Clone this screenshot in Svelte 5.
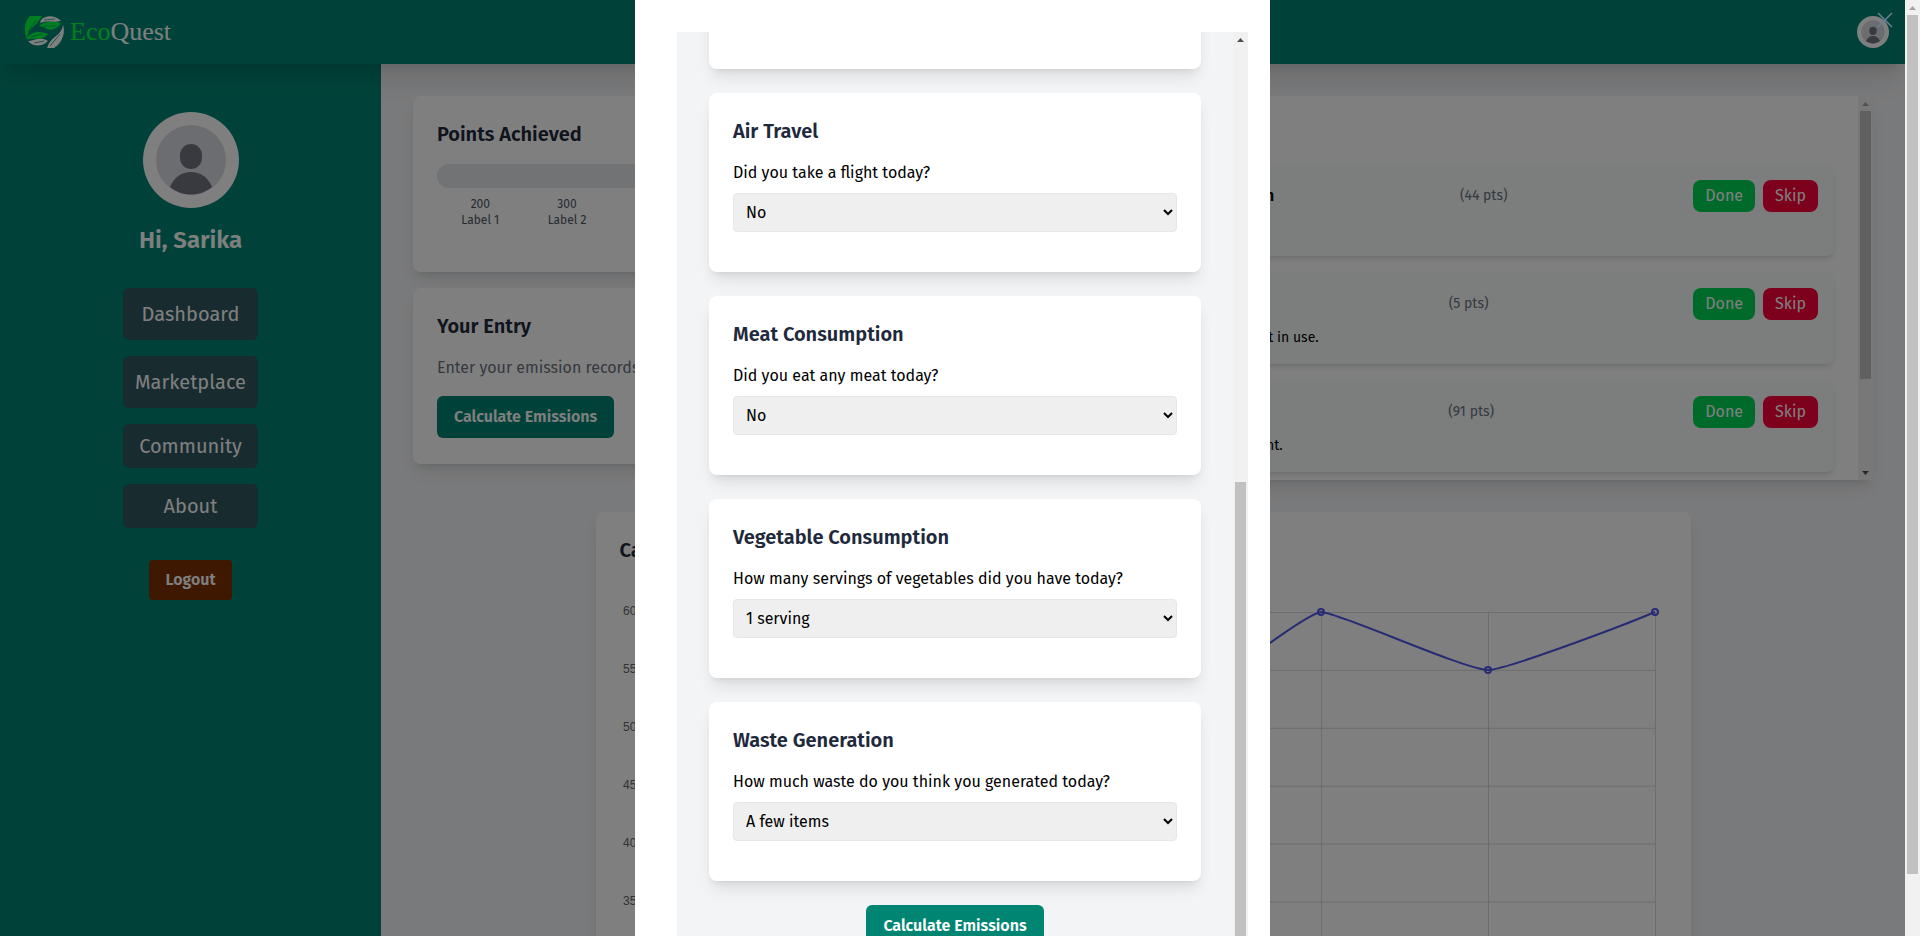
<script>
  import { onMount } from 'svelte';

  const nav = [
    { label: 'Dashboard', tall: true },
    { label: 'Marketplace', tall: true },
    { label: 'Community', tall: false },
    { label: 'About', tall: false }
  ];

  const milestones = [200, 300, 400, 500, 600];

  const tasks = [
    {
      title: 'Replace Car Trips With Public Transportation',
      points: 44,
      text: 'Take the bus or the train today.'
    },
    {
      title: 'Unplug All of Your Devices When Unused',
      points: 5,
      text: 'Unplug chargers and electrical devices that are not in use.'
    },
    {
      title: 'Plant a New Tree in Your Own Community',
      points: 91,
      text: 'Plant trees and help renew the natural environment.'
    }
  ];

  const questions = [
    { id: 'car', title: 'Car Travel', text: 'Did you drive a car today?', options: ['No', 'Yes'] },
    { id: 'air', title: 'Air Travel', text: 'Did you take a flight today?', options: ['No', 'Yes'] },
    { id: 'meat', title: 'Meat Consumption', text: 'Did you eat any meat today?', options: ['No', 'Yes'] },
    {
      id: 'vegetables',
      title: 'Vegetable Consumption',
      text: 'How many servings of vegetables did you have today?',
      options: ['1 serving', '2 servings', '3 servings']
    },
    {
      id: 'waste',
      title: 'Waste Generation',
      text: 'How much waste do you think you generated today?',
      options: ['A few items', 'One bag', 'Several bags']
    }
  ];

  const rows = [60, 55, 50, 45, 40, 35, 30];
  const columns = [34, 201, 368, 534, 701, 868, 1035];
  const dots = [[534, 148], [701, 32], [868, 90], [1035, 32]];

  let form;
  onMount(() => {
    form.scrollTop = 174;
  });
</script>

{#snippet person()}
  <svg class="person" viewBox="0 0 96 96" aria-hidden="true">
    <circle cx="48" cy="48" r="48" fill="#fff" />
    <circle cx="48" cy="48" r="35" fill="#d9dbe1" />
    <rect x="37" y="32" width="22" height="25" rx="11" fill="#72757e" />
    <path d="M27 75C31 65 39 60 48 60S65 65 69 75C57 85 39 85 27 75Z" fill="#72757e" />
  </svg>
{/snippet}

<div class="window">
  <div class="page">
    <header>
      <a class="brand" href="#home" aria-label="EcoQuest">
        <svg viewBox="0 0 40 32" aria-hidden="true">
          <path d="M6 0H18C15 5 12 8 8 12C5 15 3 18 3 23C-1 14 1 5 6 0Z" fill="#00ff40" />
          <path d="M15 10C20 5 29 5 37 7C32 14 25 16 20 11Z" fill="#00ff40" />
          <path d="M2 23C7 16 14 14 24 18C18 25 11 22 2 23Z" fill="#00ff40" />
          <path d="M17 4C22 -1 31 -1 37 5C29 7 25 4 16 7Z" fill="#fff" />
          <path d="M39 9C42 18 37 28 30 32H23C25 26 28 23 32 20C36 17 38 14 39 9Z" fill="#fff" />
          <path d="M4 25C10 25 16 20 24 25C18 31 9 31 4 25Z" fill="#fff" />
          <path d="M4 16L12 4M20 10H32M7 21L18 18M20 4L31 3M26 30L36 18M10 27L20 25M6 29L12 32" fill="none" stroke="#008573" stroke-width=".7" />
        </svg>
        <span><b>Eco</b>Quest</span>
      </a>
      <button class="account" aria-label="Account">{@render person()}</button>
    </header>

    <div class="columns">
      <aside>
        <div class="portrait">{@render person()}</div>
        <h1>Hi, Sarika</h1>
        <nav>
          {#each nav as item}
            <a class:tall={item.tall} href="#{item.label.toLowerCase()}">{item.label}</a>
          {/each}
        </nav>
        <button class="logout">Logout</button>
      </aside>

      <main>
        <div class="top">
          <div class="left">
            <section class="card">
              <h2>Points Achieved</h2>
              <div class="track"></div>
              <div class="milestones">
                {#each milestones as value, i}
                  <div>{value}<br />Label {i + 1}</div>
                {/each}
              </div>
            </section>
            <section class="card">
              <h2>Your Entry</h2>
              <p>Enter your emission records here</p>
              <button class="primary">Calculate Emissions</button>
            </section>
          </div>
          <section class="panel">
            <div class="tasks">
              <h2>Tasks For Today</h2>
              {#each tasks as task}
                <article>
                  <div class="taskline">
                    <h3>{task.title}</h3>
                    <span>({task.points} pts)</span>
                    <div class="actions">
                      <button class="done">Done</button>
                      <button class="skip">Skip</button>
                    </div>
                  </div>
                  <p>{task.text}</p>
                </article>
              {/each}
            </div>
            <div class="bar">
              <i class="up off"></i>
              <div class="thumb task-thumb"></div>
              <i class="down"></i>
            </div>
          </section>
        </div>

        <section class="card chart">
          <h2>Carbon Emissions</h2>
          <svg viewBox="0 0 1047 523" aria-label="Carbon emissions by month">
            <g stroke="#000" stroke-opacity=".14" stroke-width="1">
              {#each rows as value, i}
                <line x1="26" x2="1035" y1={32.5 + i * 57.9} y2={32.5 + i * 57.9} />
              {/each}
              {#each columns as x}
                <line x1={x + 0.5} x2={x + 0.5} y1="32" y2="380" />
              {/each}
            </g>
            {#each rows as value, i}
              <text x="3" y={35 + i * 58}>{value}</text>
            {/each}
            <g fill="none" stroke="#4f56e8" stroke-width="2">
              <path d="M534 148C554 138 678 36 701 32C718 32 845 90 868 90C885 90 1002 46 1035 32" />
              {#each dots as [x, y]}
                <circle cx={x} cy={y} r="3" />
              {/each}
            </g>
          </svg>
        </section>
      </main>
    </div>

    <div class="overlay">
      <div class="modal" role="dialog" aria-label="Calculate emissions">
        <div class="scroller">
          <form bind:this={form} onsubmit={(e) => e.preventDefault()}>
            {#each questions as q}
              <section class="card question">
                <h2>{q.title}</h2>
                <label for={q.id}>{q.text}</label>
                <select id={q.id}>
                  {#each q.options as option}
                    <option>{option}</option>
                  {/each}
                </select>
              </section>
            {/each}
            <button class="primary">Calculate Emissions</button>
          </form>
          <div class="bar">
            <i class="up"></i>
            <div class="thumb form-thumb"></div>
          </div>
        </div>
      </div>
      <button class="close" aria-label="Close">
        <svg viewBox="0 0 14 14" aria-hidden="true"><path d="M0 0L14 14M14 0L0 14" /></svg>
      </button>
    </div>
  </div>
  <div class="bar window-bar">
    <i class="up off"></i>
    <div class="thumb"></div>
  </div>
</div>

<style>
  :global(body) {
    overflow: hidden;
  }
  .window,
  .window * {
    box-sizing: border-box;
  }
  .window {
    display: flex;
    height: 100vh;
    overflow: hidden;
    font: 16px/24px 'Fira Sans', 'Noto Sans', sans-serif;
    color: #000;
  }
  button,
  select {
    font: inherit;
    margin: 0;
    border: 0;
  }
  h1, h2, h3, p {
    margin: 0;
  }
  .page {
    position: relative;
    flex: 1;
    min-width: 0;
    overflow: hidden;
    background: #f3f4f6;
  }
  header {
    position: relative;
    z-index: 1;
    display: flex;
    align-items: center;
    justify-content: space-between;
    height: 64px;
    padding: 0 16px 0 24px;
    background: #008573;
    box-shadow: 0 20px 25px -5px #0000001a, 0 8px 10px -6px #0000001a;
  }
  .brand {
    display: flex;
    align-items: center;
    gap: 6px;
    color: #fff;
    text-decoration: none;
    font: 26px/32px 'Liberation Serif', serif;
  }
  .brand svg {
    width: 40px;
    height: 32px;
  }
  .brand b {
    color: #00ff40;
    font-weight: 400;
  }
  .account {
    width: 32px;
    height: 32px;
    padding: 0;
    background: none;
  }
  .person {
    display: block;
    width: 100%;
  }
  .columns {
    display: grid;
    grid-template-columns: 20% 1fr;
    height: 100%;
  }
  aside {
    display: flex;
    flex-direction: column;
    align-items: center;
    padding: 48px 32px;
    background: #008573;
    color: #fff;
  }
  .portrait {
    width: 96px;
  }
  h1 {
    margin: 16px 0 32px;
    font-size: 24px;
    line-height: 32px;
    font-weight: 600;
  }
  nav {
    display: flex;
    flex-direction: column;
    gap: 16px;
    margin-bottom: 32px;
  }
  nav a {
    padding: 8px 12px;
    border-radius: 6px;
    background: #30565e;
    color: #fff;
    font-size: 20px;
    line-height: 28px;
    text-align: center;
    text-decoration: none;
  }
  nav a.tall {
    padding: 12px;
  }
  .logout {
    padding: 8px 16px;
    border-radius: 4px;
    background: #7c3003;
    color: #fff;
    font-weight: 600;
  }
  main {
    min-width: 0;
    padding: 32px;
  }
  .top {
    display: grid;
    grid-template-columns: 1fr 2fr;
    align-items: start;
    gap: 16px;
  }
  .left {
    display: grid;
    gap: 16px;
    min-width: 0;
  }
  .left .card {
    min-height: 176px;
  }
  .card {
    padding: 24px;
    border-radius: 8px;
    background: #fff;
    box-shadow: 0 10px 15px -3px #0000001a, 0 4px 6px -4px #0000001a;
  }
  h2 {
    margin-bottom: 16px;
    color: #1e293b;
    font-size: 20px;
    line-height: 28px;
    font-weight: 600;
  }
  .left p {
    margin-bottom: 16px;
    color: #6b7280;
  }
  .primary {
    height: 42px;
    padding: 0 17px;
    border-radius: 6px;
    background: #008573;
    color: #fff;
    font-weight: 600;
  }
  .track {
    height: 24px;
    border-radius: 12px;
    background: #e5e7eb;
  }
  .milestones {
    display: grid;
    grid-template-columns: repeat(5, 1fr);
    margin-top: 8px;
    color: #4b5563;
    font-size: 12px;
    line-height: 16px;
    text-align: center;
  }
  .panel {
    display: flex;
    height: 384px;
    border-radius: 8px;
    background: #fff;
    box-shadow: 0 10px 15px -3px #0000001a, 0 4px 6px -4px #0000001a;
  }
  .tasks {
    flex: 1;
    min-width: 0;
    overflow: hidden;
    padding: 24px;
  }
  article {
    min-height: 92px;
    margin-bottom: 16px;
    padding: 16px;
    border-radius: 8px;
    background: #f7fcf9;
    box-shadow: 0 4px 6px -1px #0000001a, 0 2px 4px -2px #0000001a;
  }
  .taskline {
    display: flex;
    justify-content: space-between;
  }
  h3 {
    font-size: 16px;
    line-height: 32px;
    font-weight: 600;
  }
  .taskline span {
    color: #6b7280;
    font-size: 14px;
    line-height: 32px;
  }
  .actions {
    display: flex;
    gap: 8px;
  }
  .actions button {
    height: 32px;
    padding: 0 12px;
    border-radius: 8px;
    color: #fff;
  }
  .actions .done {
    background: #00d455;
  }
  .actions .skip {
    background: #fb0038;
  }
  article p {
    margin-top: 8px;
    font-size: 14px;
    line-height: 20px;
  }
  .chart {
    width: 75%;
    margin: 32px auto 0;
  }
  .chart svg {
    display: block;
    width: 100%;
  }
  .chart text {
    fill: #666;
    font: 12px 'Liberation Sans', sans-serif;
  }
  .overlay {
    position: absolute;
    inset: 0;
    z-index: 2;
    display: flex;
    justify-content: center;
    background: #00000080;
  }
  .modal {
    width: 33.3333%;
    padding: 32px 22px 0 42px;
    background: #fff;
  }
  .scroller {
    display: flex;
    height: 100%;
    background: #f3f4f6;
  }
  form {
    display: flex;
    flex: 1;
    flex-direction: column;
    align-items: center;
    gap: 24px;
    min-width: 0;
    padding: 32px;
    overflow: auto;
    scrollbar-width: none;
  }
  .question {
    flex: none;
    width: 100%;
  }
  form .primary {
    flex: none;
  }
  label {
    display: block;
    margin-bottom: 8px;
  }
  select {
    display: block;
    width: 100%;
    height: 39px;
    margin-bottom: 16px;
    padding: 0 8px;
    border: 1px solid #e5e7eb;
    border-radius: 4px;
    background-color: #efefef;
    color: #000;
  }
  .close {
    position: absolute;
    top: 13px;
    right: 13px;
    width: 14px;
    height: 14px;
    padding: 0;
    background: none;
  }
  .close svg {
    display: block;
    overflow: visible;
    fill: none;
    stroke: #6b7f94;
    stroke-width: 1.5;
  }
  .bar {
    display: flex;
    flex: none;
    flex-direction: column;
    align-items: center;
    width: 15px;
    background: #f1f1f1;
  }
  .bar i {
    width: 7px;
    height: 4px;
    margin: 6px 0 5px;
    background: #505050;
  }
  .up {
    clip-path: polygon(50% 0, 100% 100%, 0 100%);
  }
  .down {
    clip-path: polygon(0 0, 100% 0, 50% 100%);
  }
  .bar .off {
    background: #a3a3a3;
  }
  .thumb {
    width: 11px;
    background: #c1c1c1;
  }
  .task-thumb {
    height: 268px;
    margin-bottom: auto;
  }
  .form-thumb {
    flex: 1;
    margin-top: 435px;
  }
  .window-bar .thumb {
    height: 859px;
  }
</style>
